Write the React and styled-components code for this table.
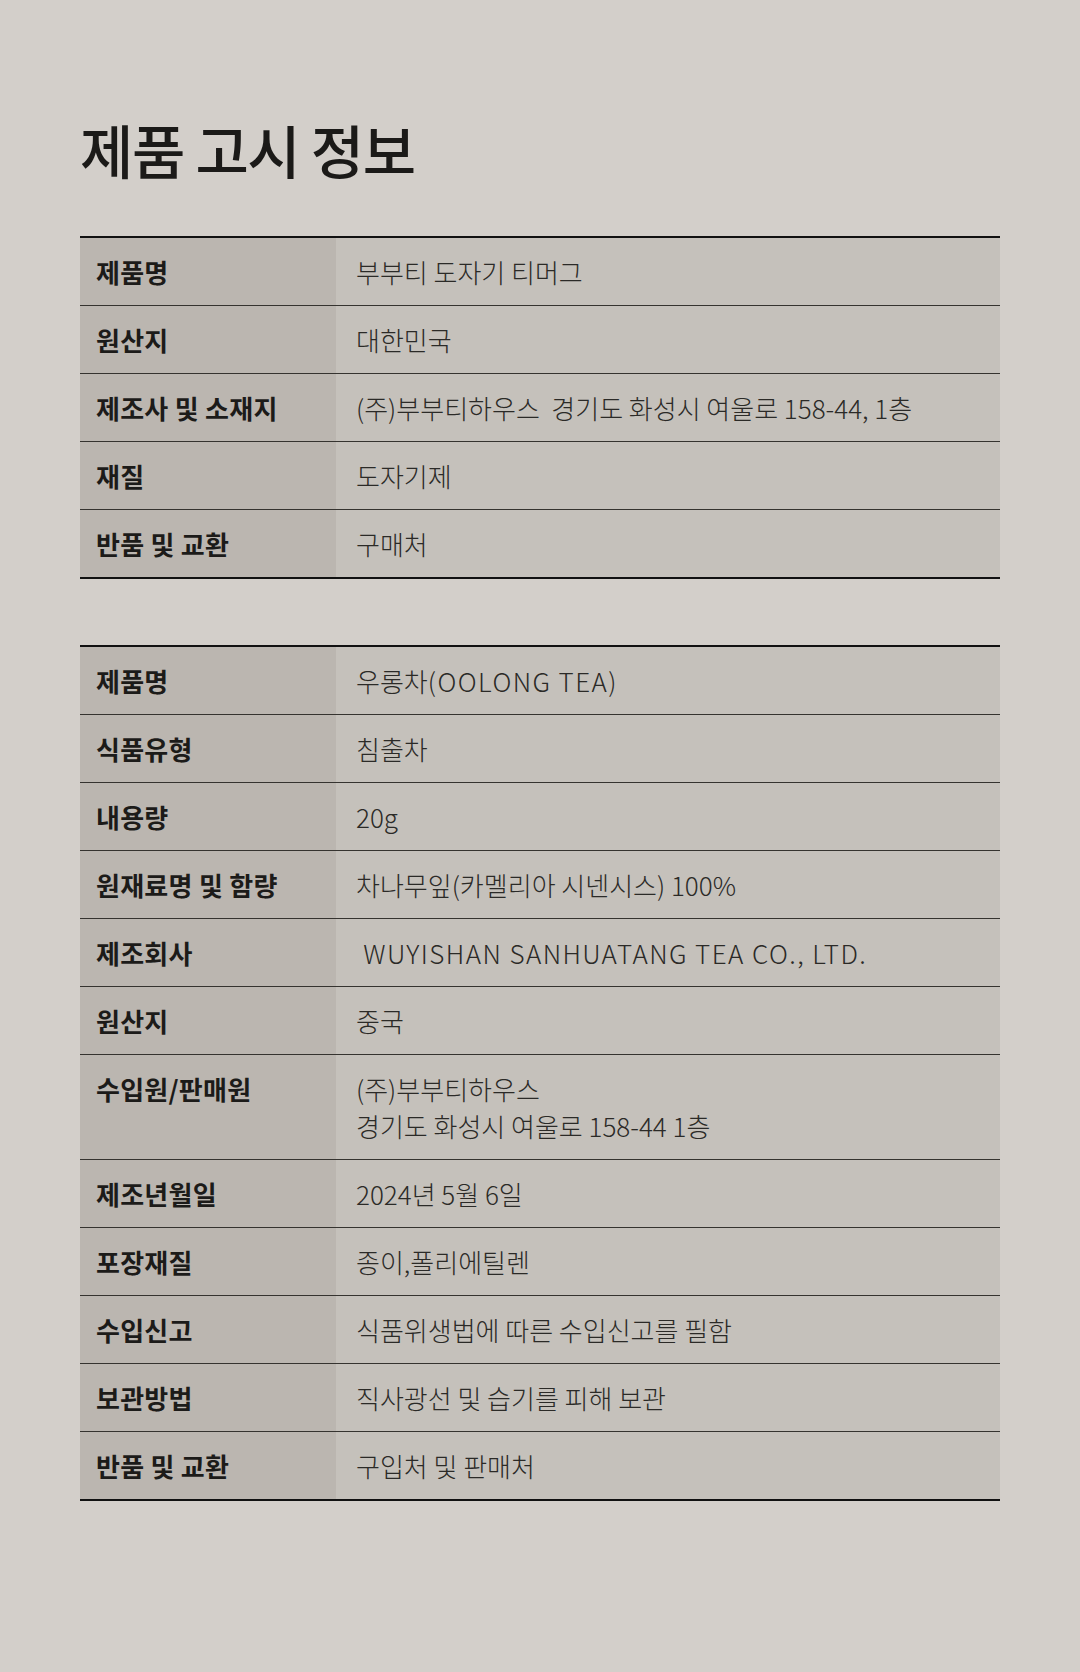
import styled, { createGlobalStyle } from "styled-components";

const GlobalStyle = createGlobalStyle`
  html, body {
    margin: 0;
    padding: 0;
    background: #d3cfca;
  }
  body {
    min-height: 100vh;
    font-family: "Noto Sans CJK KR", "Noto Sans", sans-serif;
  }
`;

const Page = styled.div`
  width: 1080px;
  min-height: 1672px;
  box-sizing: border-box;
  padding: 115px 80px 0;
  background: #d3cfca;
`;

const Title = styled.h1`
  margin: 0 0 52px;
  font-size: 58px;
  line-height: 69px;
  font-weight: 500;
  letter-spacing: -0.025em;
  color: #1b1a18;
`;

const Table = styled.div`
  display: grid;
  grid-template-columns: 256px 1fr;
  border-top: 2px solid #111;
  border-bottom: 2px solid #111;
  margin-bottom: ${(props) => props.$gap || 0}px;
`;

const Label = styled.div`
  background: #bbb6b0;
  padding: 15px 16px;
  font-size: 26px;
  line-height: 37px;
  font-weight: 700;
  letter-spacing: 0.01em;
  color: #1c1b19;
  border-top: ${(props) => (props.$first ? "none" : "1px solid #35332f")};
`;

const Value = styled.div`
  background: #c5c1bb;
  padding: 15px 20px;
  font-size: 26px;
  line-height: 37px;
  font-weight: 300;
  letter-spacing: 0;
  color: #2b2a27;
  white-space: pre-line;
  border-top: ${(props) => (props.$first ? "none" : "1px solid #35332f")};
`;

// uppercase latin runs are set wider in the original
const Latin = styled.span`
  letter-spacing: 0.055em;
`;

const productInfo = [
  ["제품명", "부부티 도자기 티머그"],
  ["원산지", "대한민국"],
  ["제조사 및 소재지", "(주)부부티하우스\u00a0 경기도 화성시 여울로 158-44, 1층"],
  ["재질", "도자기제"],
  ["반품 및 교환", "구매처"],
];

const teaInfo = [
  ["제품명", <>우롱차<Latin>(OOLONG TEA)</Latin></>],
  ["식품유형", "침출차"],
  ["내용량", "20g"],
  ["원재료명 및 함량", "차나무잎(카멜리아 시넨시스) 100%"],
  ["제조회사", <Latin>{"\u00a0WUYISHAN SANHUATANG TEA CO., LTD."}</Latin>],
  ["원산지", "중국"],
  ["수입원/판매원", "(주)부부티하우스\n경기도 화성시 여울로 158-44 1층"],
  ["제조년월일", "2024년 5월 6일"],
  ["포장재질", "종이,폴리에틸렌"],
  ["수입신고", "식품위생법에 따른 수입신고를 필함"],
  ["보관방법", "직사광선 및 습기를 피해 보관"],
  ["반품 및 교환", "구입처 및 판매처"],
];

function InfoTable({ rows, gap }) {
  return (
    <Table $gap={gap}>
      {rows.map(([label, value], i) => [
        <Label key={`l${i}`} $first={i === 0}>
          {label}
        </Label>,
        <Value key={`v${i}`} $first={i === 0}>
          {value}
        </Value>,
      ])}
    </Table>
  );
}

export default function App() {
  return (
    <Page>
      <GlobalStyle />
      <Title>제품 고시 정보</Title>
      <InfoTable rows={productInfo} gap={66} />
      <InfoTable rows={teaInfo} />
    </Page>
  );
}
